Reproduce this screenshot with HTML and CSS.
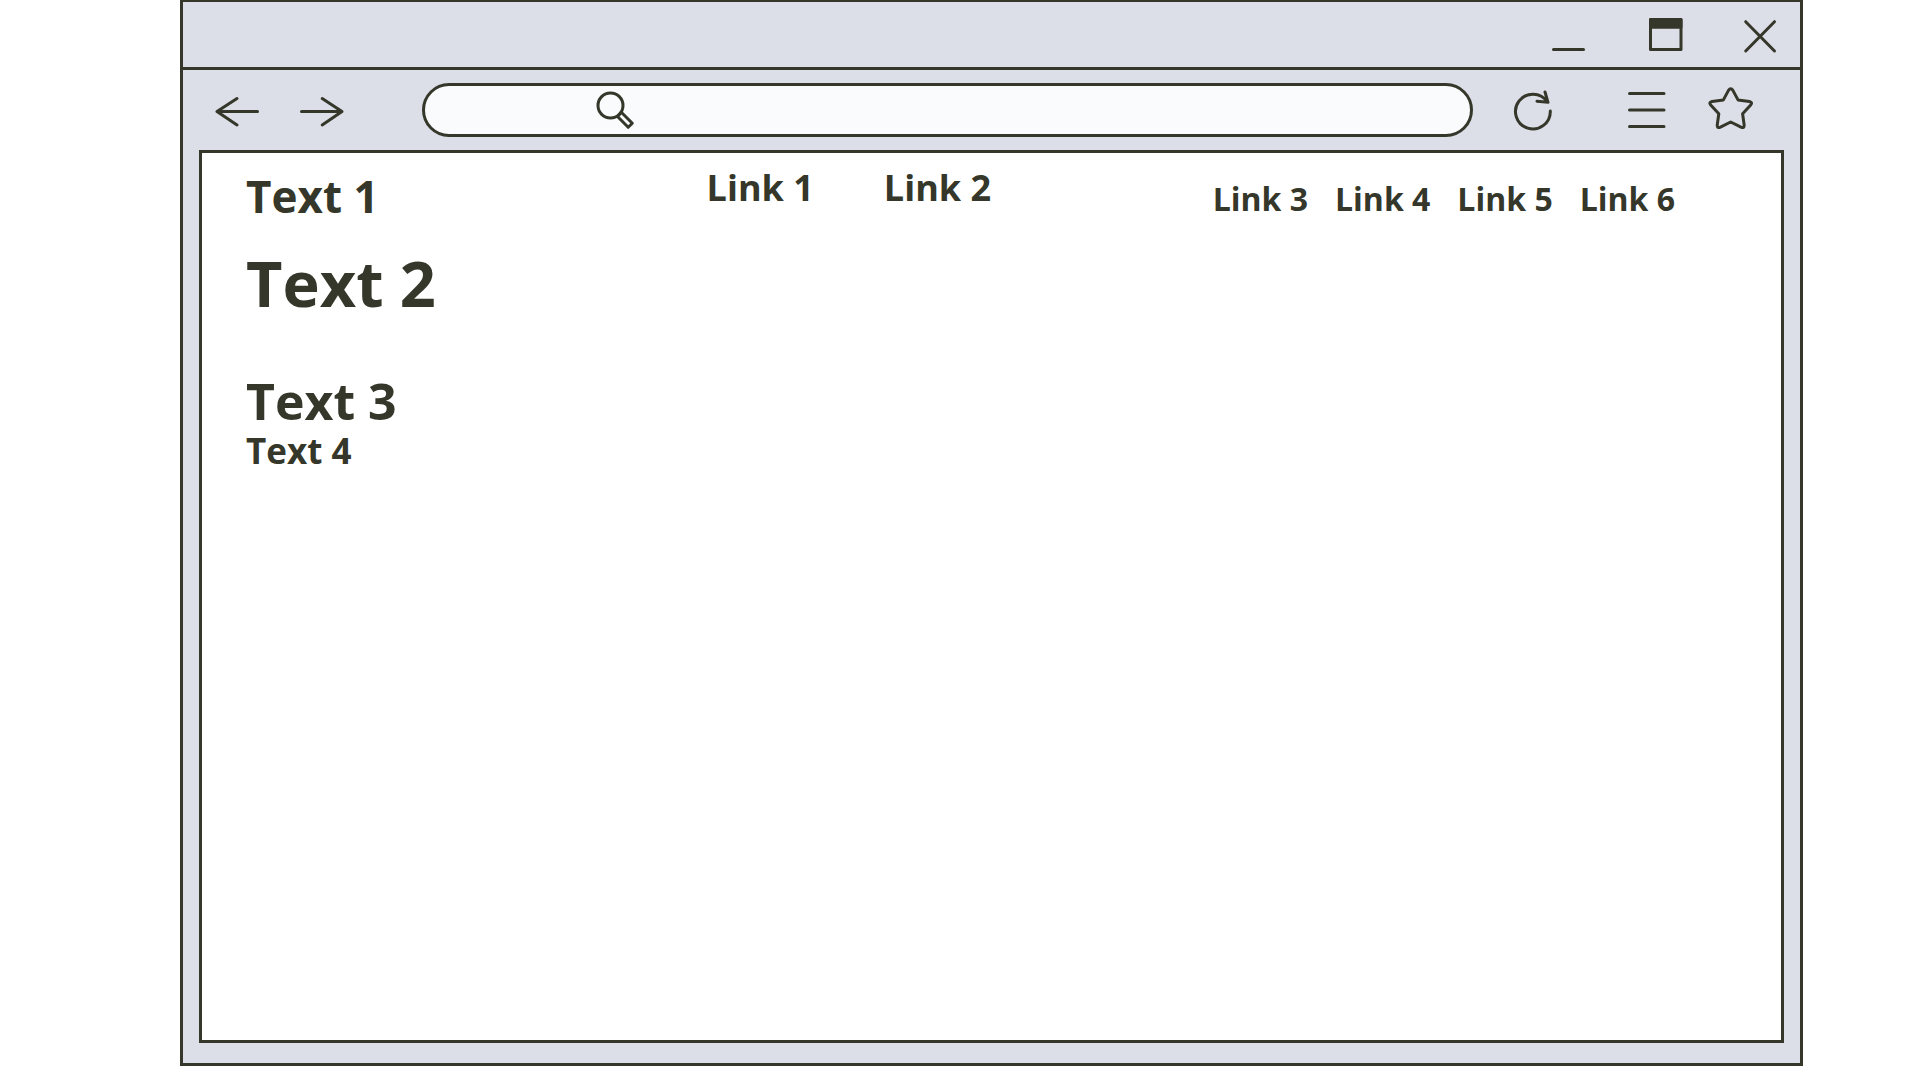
FILE: index.html
```html
<!DOCTYPE html>
<html lang="en">
<head>
<meta charset="utf-8">
<title>Browser wireframe</title>
<link rel="stylesheet" href="styles.css">
</head>
<body>
<div class="window">
  <div class="titlebar">
    <button class="control" type="button" aria-label="Minimize">
      <svg class="icon" viewBox="0 0 40 40"><path d="M5.5 35.5H35.5"/></svg>
    </button>
    <button class="control" type="button" aria-label="Maximize">
      <svg class="icon" viewBox="0 0 40 40"><path d="M6.5 5.5H37V35.6H6.5Z"/><path class="solid" d="M6.5 5.5H37V13.2H6.5Z"/></svg>
    </button>
    <button class="control" type="button" aria-label="Close">
      <svg class="icon" viewBox="0 0 40 40"><path d="M5.7 7.7L34.5 37M34.5 7.7L5.7 37"/></svg>
    </button>
  </div>
  <div class="toolbar">
    <div class="history">
      <button class="tool" type="button" aria-label="Back">
        <svg class="icon" viewBox="0 0 48 48"><path d="M43.5 25.5H3M23 12.5L3 25.5L23 39"/></svg>
      </button>
      <button class="tool" type="button" aria-label="Forward">
        <svg class="icon" viewBox="0 0 48 48"><path d="M3.5 25.5H44M24.2 12.5L44 25.5L24.2 39"/></svg>
      </button>
    </div>
    <label class="address">
      <svg class="icon address-icon" viewBox="0 0 48 48"><circle cx="18.5" cy="19.5" r="12.5"/><path d="M29.3 26.3L40.3 37.3L36.2 41.3L25.5 30.5Z"/></svg>
      <input class="address-input" type="text" aria-label="Address">
    </label>
    <div class="actions">
      <button class="tool" type="button" aria-label="Reload">
        <svg class="icon" viewBox="0 0 48 48"><path d="M41.3 25A17.4 17.4 0 1 1 38.3 15.8M36 6L39 16.3L28 15.2"/></svg>
      </button>
      <div class="extras">
        <button class="tool" type="button" aria-label="Menu">
          <svg class="icon" viewBox="0 0 48 48"><path d="M6.5 7.5H41M6.5 24H41M6.5 40.5H41"/></svg>
        </button>
        <button class="tool" type="button" aria-label="Bookmark">
          <svg class="icon" viewBox="0 0 48 48"><path d="M21.5 4.4Q23.7 1 25.9 4.4L31 13.9L42.4 15.5Q46 16.4 43.7 19L35.6 27.8L37.2 39.3Q37 42.5 34 41.2L23.7 36L13.4 41.2Q10.4 42.5 10.2 39.3L11.8 27.8L3.7 19Q1.4 16.4 5 15.5L16.4 13.9Z"/></svg>
        </button>
      </div>
    </div>
  </div>
  <main class="page">
    <header class="header">
      <p class="text-1">Text 1</p>
      <nav class="nav-main" aria-label="Main">
        <a class="link-large" href="#">Link 1</a>
        <a class="link-large" href="#">Link 2</a>
      </nav>
      <nav class="nav-side" aria-label="Secondary">
        <a class="link-small" href="#">Link 3</a>
        <a class="link-small" href="#">Link 4</a>
        <a class="link-small" href="#">Link 5</a>
        <a class="link-small" href="#">Link 6</a>
      </nav>
    </header>
    <h1 class="text-2">Text 2</h1>
    <h2 class="text-3">Text 3</h2>
    <p class="text-4">Text 4</p>
  </main>
</div>
</body>
</html>
```

FILE: styles.css
```css
* { box-sizing: border-box; }

body {
  margin: 0;
  background: #fff;
  color: #343729;
  font-family: "Open Sans", "Noto Sans", sans-serif;
  font-weight: 700;
}

h1, h2, p { margin: 0; }

.window {
  display: flex;
  flex-direction: column;
  min-height: calc(100vh - 14px);
  margin: 0 117px 14px 180px;
  border: 3px solid #343729;
  border-top-width: 2px;
  background: #dddfe8;
}

.titlebar {
  display: flex;
  justify-content: flex-end;
  gap: 56px;
  padding: 12px 20px 13px;
  border-bottom: 3px solid #343729;
}

.control, .tool {
  flex: none;
  display: block;
  padding: 0;
  border: 0;
  background: none;
  color: inherit;
}

.control { width: 40px; height: 40px; }
.tool { width: 48px; height: 48px; }

.icon {
  display: block;
  width: 100%;
  height: 100%;
  fill: none;
  stroke: #343729;
  stroke-width: 3px;
  stroke-linecap: round;
  stroke-linejoin: round;
}

.solid { fill: #343729; }

.toolbar {
  display: flex;
  align-items: center;
  padding: 13px 45px 13px 31px;
}

.history { display: flex; gap: 36px; }

.address {
  flex: 1;
  display: flex;
  align-items: center;
  min-width: 0;
  height: 54px;
  margin: 0 36px 0 76px;
  padding: 0 24px 0 167px;
  border: 3px solid #343729;
  border-radius: 27px;
  background: #fafbfd;
}

.address-icon { flex: none; width: 48px; height: 48px; }

.address-input {
  flex: 1;
  min-width: 0;
  height: 40px;
  border: 0;
  outline: 0;
  background: transparent;
  color: inherit;
  font: 400 24px/32px "Open Sans", sans-serif;
}

.actions { display: flex; gap: 66px; }
.extras { display: flex; gap: 36px; }

.page {
  flex: 1;
  margin: 0 16px 20px;
  padding: 13px 106px 40px 44px;
  border: 3px solid #343729;
  background: #fff;
}

.header {
  display: flex;
  align-items: flex-start;
  margin-bottom: 17px;
}

.text-1 { font-size: 44px; line-height: 60px; }
.text-2 { margin-bottom: 48px; font-size: 63px; line-height: 80px; }
.text-3 { font-size: 50px; line-height: 60px; }
.text-4 { font-size: 35px; line-height: 40px; }

.nav-main {
  display: flex;
  gap: 70px;
  margin-left: 328px;
  padding-top: 2px;
}

.nav-side {
  display: flex;
  gap: 27px;
  margin-left: auto;
  padding-top: 13px;
}

.link-large, .link-small {
  color: inherit;
  text-decoration: none;
  line-height: 40px;
}

.link-large { font-size: 36px; }
.link-small { font-size: 32px; }
```
